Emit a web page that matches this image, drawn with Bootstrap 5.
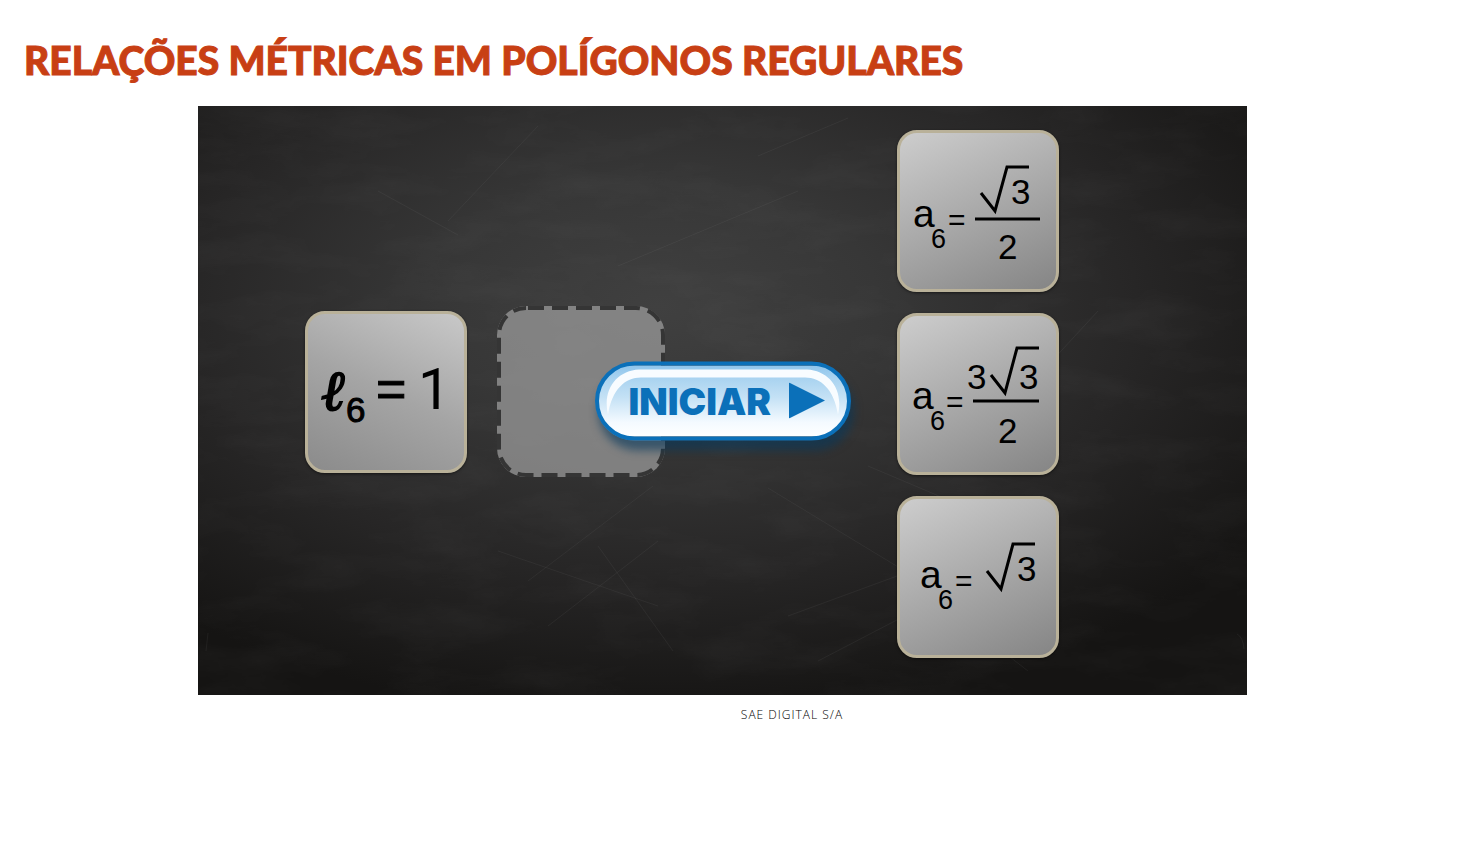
<!DOCTYPE html>
<html lang="pt-BR">
<head>
<meta charset="utf-8">
<meta name="viewport" content="width=device-width, initial-scale=1">
<title>Relações métricas em polígonos regulares</title>
<link href="https://cdn.jsdelivr.net/npm/bootstrap@5.3.0/dist/css/bootstrap.min.css" rel="stylesheet">
<style>
  body { background: #fff; padding-right: 15px; }
  .page-title { color: #c83f14; font: 900 39px/48px Lato, "Open Sans", sans-serif; padding: 36px 24px 22px; margin: 0; -webkit-text-stroke: 1px #c83f14; }
  .board { max-width: 1049px; padding: 24px 0 37px; background: #2c2b2b; isolation: isolate; }
  .board-texture { z-index: -1; }
  .prompt-area { padding-left: 107px; gap: 30px; }
  .options-area { padding-right: 188px; gap: 21px; }
  .tile { width: 162px; border: 3px solid #b9b199; border-radius: 20px; background: linear-gradient(155deg, #cdcdcd, #a9a9a9 50%, #858585); box-shadow: 0 1px 3px #0008; }
  .tile-prompt { background: linear-gradient(205deg, #c8c8c8, #a5a5a5 50%, #8b8b8b); }
  .tile svg { display: block; margin: -3px; font-family: "Liberation Sans", Arial, sans-serif; }
  .radical { fill: none; stroke: #000; stroke-width: 3; }
  .start-btn { width: 256px; height: 79px; border: 4px solid #0b70b9; border-radius: 40px; padding: 0 16px 0 30px; color: #0b70b9; font: 900 37px/1 Inter, "Liberation Sans", sans-serif;
    background: linear-gradient(#8fc5ec 0, #a9d3f0 18%, #c4e1f5 45%, #f4faff 80%, #fff); box-shadow: 3px 10px 8px #08385c99; }
  .start-btn .gloss { inset: 0; }
  .start-btn .caption-row { gap: 18px; }
  .credit { font: 300 12px/18px "Open Sans", sans-serif; color: #000; padding: 11px 0 24px 139px; letter-spacing: 1px; }
</style>
</head>
<body>
<header><h1 class="page-title">RELAÇÕES MÉTRICAS EM POLÍGONOS REGULARES</h1></header>
<main>
  <section class="board position-relative w-100 mx-auto d-flex justify-content-between align-items-center" aria-label="Atividade">
    <svg class="board-texture position-absolute top-0 start-0 w-100 h-100" viewBox="0 0 1049 589" preserveAspectRatio="none" aria-hidden="true">
      <defs>
        <radialGradient id="glow" cx=".44" cy=".34" r=".7">
          <stop offset="0" stop-color="#404040"/><stop offset=".3" stop-color="#373737"/><stop offset=".65" stop-color="#272626"/><stop offset="1" stop-color="#151413"/>
        </radialGradient>
        <filter id="dust" x="0" y="0" width="100%" height="100%">
          <feTurbulence type="fractalNoise" baseFrequency=".01 .03" numOctaves="6" seed="8"/>
          <feColorMatrix values="0 0 0 0 .7  0 0 0 0 .7  0 0 0 0 .7  .5 0 0 0 -.2"/>
        </filter>
      </defs>
      <rect width="1049" height="589" fill="url(#glow)"/>
      <rect width="1049" height="589" filter="url(#dust)" opacity=".14"/>
      <g fill="none" stroke="#aaa" stroke-opacity=".08">
        <path d="M8 545l2-18M1039 528q6 3 7 15M180 85l80 44M340 20l-90 95M420 160l180-75M300 445l160 55M350 520l110-85M400 440l75 105M570 382l140 85M590 510l150-55M740 495l90 70M620 555l125-65M560 50l90-38M170 210l90 55M330 475l125-95M670 360l130 55M840 270l60-65"/>
      </g>
    </svg>

    <div class="prompt-area d-flex align-items-center pb-1">
      <div class="tile tile-prompt">
        <svg viewBox="0 0 162 162" role="group">
          <text x="17" y="99" font-family="DejaVu Serif" font-size="56" font-weight="bold" font-style="italic" stroke="#000" stroke-width="2">ℓ</text>
          <text x="41" y="111" font-size="35" stroke="#000">6</text>
          <text x="71" y="96" font-size="52" stroke="#000">=</text>
          <text x="113" y="98" font-size="58" font-family="Roboto">1</text>
        </svg>
      </div>
      <svg width="168" height="172" viewBox="0 0 168 172" role="img" aria-label="Solte a resposta aqui">
        <rect width="168" height="171" rx="29" fill="#999" fill-opacity=".76"/>
        <rect x="2" y="2" width="164" height="167" rx="27" fill="none" stroke="#353535" stroke-width="4" stroke-dasharray="16 8" stroke-dashoffset="-2"/>
      </svg>
    </div>

    <div class="options-area d-flex flex-column">
      <div class="tile">
        <svg viewBox="0 0 162 162" role="group">
          <text x="16" y="97" font-size="39">a</text>
          <text x="34" y="118" font-size="27">6</text>
          <text x="51" y="100" font-size="30">=</text>
          <path class="radical" d="M84 63L98 81L110 37H132M78 89H143"/>
          <text x="114" y="74" font-size="35">3</text>
          <text x="101" y="129" font-size="35">2</text>
        </svg>
      </div>
      <div class="tile">
        <svg viewBox="0 0 162 162" role="group">
          <text x="15" y="96" font-size="39">a</text>
          <text x="33" y="117" font-size="27">6</text>
          <text x="49" y="99" font-size="30">=</text>
          <text x="70" y="76" font-size="35">3</text>
          <path class="radical" d="M94 62L108 80L120 35H142M76 88H142"/>
          <text x="122" y="76" font-size="35">3</text>
          <text x="101" y="130" font-size="35">2</text>
        </svg>
      </div>
      <div class="tile">
        <svg viewBox="0 0 162 162" role="group">
          <text x="23" y="92" font-size="39">a</text>
          <text x="41" y="113" font-size="27">6</text>
          <text x="58" y="95" font-size="30">=</text>
          <path class="radical" d="M90 75L104 93L116 48H138"/>
          <text x="120" y="85" font-size="35">3</text>
        </svg>
      </div>
    </div>

    <button type="button" class="start-btn position-absolute top-50 start-50 translate-middle">
      <svg class="gloss position-absolute w-100 h-100" viewBox="0 0 248 71" preserveAspectRatio="none" aria-hidden="true">
        <path d="M9 49C3 24 18 5 40 4H208C230 5 245 24 239 49C235 24 222 12 206 12H42C26 12 13 24 9 49Z" fill="#f8fcff"/>
      </svg>
      <span class="caption-row position-relative d-flex align-items-center">
        <span>INICIAR</span>
        <svg width="36" height="36" viewBox="0 0 36 36" aria-hidden="true"><path d="M0 0L36 18L0 36Z" fill="#0b70b9"/></svg>
      </span>
    </button>
  </section>
</main>
<footer class="credit text-center">SAE DIGITAL S/A</footer>
<script src="https://cdn.jsdelivr.net/npm/bootstrap@5.3.0/dist/js/bootstrap.bundle.min.js"></script>
</body>
</html>
